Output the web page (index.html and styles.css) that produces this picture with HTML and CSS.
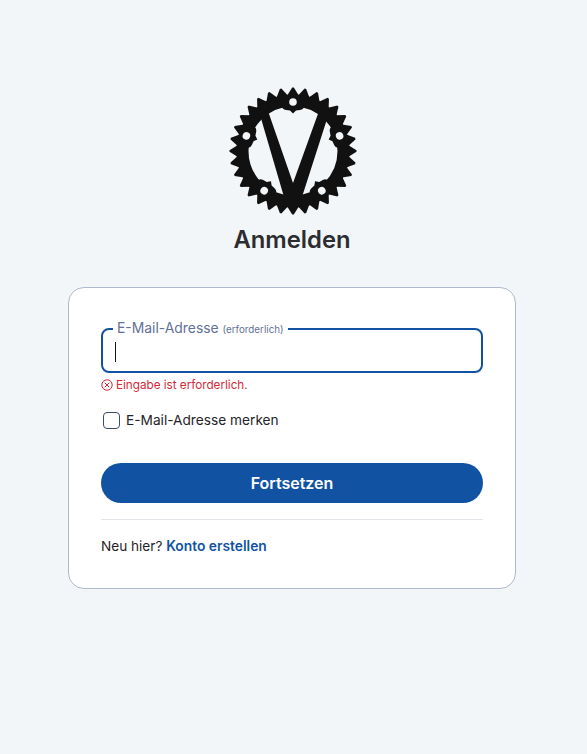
FILE: index.html
```html
<!DOCTYPE html>
<html lang="de">
  <head>
    <meta charset="UTF-8" />
    <meta name="viewport" content="width=device-width, initial-scale=1.0" />
    <title>Anmelden</title>
    <link rel="stylesheet" href="styles.css">
  </head>
  <body>
    <main class="page">
      <svg class="logo" width="128" height="130" viewBox="-64 -65 128 130" aria-hidden="true">
        <defs>
          <polygon id="t1" points="-5.8,-55.5 -0.8,-63.5 0.8,-63.5 5.8,-55.5" />
          <g id="t2"><use href="#t1" /><use href="#t1" transform="rotate(180)" /></g>
          <g id="t4"><use href="#t2" /><use href="#t2" transform="rotate(90)" /></g>
          <g id="t8"><use href="#t4" /><use href="#t4" transform="rotate(45)" /></g>
          <g id="t16"><use href="#t8" /><use href="#t8" transform="rotate(22.5)" /></g>
          <g id="lug">
            <path d="M-11 -52 L-11 -45 Q-11 -41.5 -7 -41 L-3 -40.5 L0 -37.5 L3 -40.5 L7 -41 Q11 -41.5 11 -45 L11 -52 Z" />
            <circle cx="0" cy="-49" r="3.8" class="hole" />
          </g>
        </defs>
        <use href="#t16" />
        <use href="#t16" transform="rotate(11.25)" />
        <circle r="50.5" fill="none" stroke="#111" stroke-width="12" />
        <use href="#lug" />
        <use href="#lug" transform="rotate(72)" />
        <use href="#lug" transform="rotate(144)" />
        <use href="#lug" transform="rotate(216)" />
        <use href="#lug" transform="rotate(288)" />
        <path d="M-33 -36 L-25 -40 L0 32 L26 -40 L35 -35 L9 46 L-9 46 Z" />
      </svg>
      <h1 class="title">Anmelden</h1>

      <form class="card">
        <fieldset class="field">
          <legend class="field_label">E-Mail-Adresse <small>(erforderlich)</small></legend>
          <span class="caret"></span>
        </fieldset>
        <p class="error">
          <svg width="12" height="12" viewBox="0 0 12 12" fill="none" stroke="#d62839" aria-hidden="true">
            <circle cx="6" cy="6" r="5.2" />
            <path d="M3.8 3.8 L8.2 8.2 M8.2 3.8 L3.8 8.2" />
          </svg>
          Eingabe ist erforderlich.
        </p>
        <label class="remember">
          <span class="check_box"></span>
          E-Mail-Adresse merken
        </label>
        <button type="button" class="submit_btn">Fortsetzen</button>
        <hr class="divider" />
        <p class="signup">Neu hier? <a href="#">Konto erstellen</a></p>
      </form>
    </main>
  </body>
</html>
```

FILE: styles.css
```css
* {
  box-sizing: border-box;
}
body {
  margin: 0;
  min-height: 754px;
  background-color: #f3f6f9;
  color: #1f2329;
  font-family: "Inter", "Liberation Sans", sans-serif;
}
.page {
  display: flex;
  flex-direction: column;
  align-items: center;
  padding: 86px 3px 0 0;
}
.logo {
  display: block;
  margin-left: 1px;
  fill: #111;
}
.logo .hole {
  fill: #f3f6f9;
}
.title {
  margin: 9px 0 0;
  height: 34px;
  line-height: 30px;
  font-size: 23.8px;
  font-weight: 600;
  color: #2b2d30;
}
.card {
  width: 448px;
  height: 302px;
  margin-top: 28px;
  padding: 32px;
  background-color: #fff;
  border: 1px solid #b0bacd;
  border-radius: 16px;
}
.field {
  display: flex;
  align-items: center;
  height: 53px;
  margin: 0;
  padding: 0 12px;
  border: 2px solid #1153a2;
  border-radius: 8px;
}
.field_label {
  margin-left: -2px;
  padding: 0 4px;
  font-size: 13.9px;
  line-height: 16px;
  color: #5f7196;
}
.field_label small {
  font-size: 9.8px;
}
.caret {
  width: 1px;
  height: 20px;
  margin-bottom: 5px;
  background-color: #111;
}
.error {
  display: flex;
  align-items: center;
  gap: 3px;
  margin: 4px 0 0;
  line-height: 16px;
  font-size: 11.7px;
  color: #d62839;
}
.remember {
  display: flex;
  align-items: center;
  gap: 6px;
  margin: 18px 0 0 2px;
  height: 18px;
  font-size: 13.7px;
  color: #1f2329;
}
.check_box {
  width: 17px;
  height: 17px;
  border: 1.5px solid #3f4d66;
  border-radius: 4px;
}
.submit_btn {
  display: block;
  width: 100%;
  height: 40px;
  margin-top: 34px;
  background-color: #1153a2;
  border: none;
  border-radius: 20px;
  color: #fff;
  font-family: inherit;
  font-size: 16px;
  font-weight: 600;
}
.divider {
  height: 1px;
  margin: 16px 0 0;
  background-color: #e1e4e8;
  border: none;
}
.signup {
  margin: 17px 0 0;
  line-height: 18px;
  font-size: 13.6px;
}
.signup a {
  color: #1153a2;
  font-weight: 600;
  font-size: 13.8px;
  text-decoration: none;
}
```
